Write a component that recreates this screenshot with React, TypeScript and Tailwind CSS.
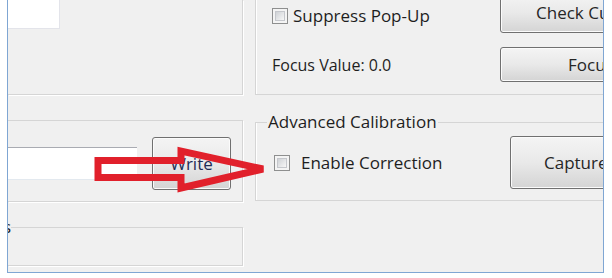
import React from 'react'

const font = { fontFamily: '"Open Sans", "Noto Sans", sans-serif' }

function CheckBox() {
  return (
    <div className="w-[16px] h-[16px] shrink-0 border border-[#8e8f8f] bg-[#f4f4f4] p-[2px]">
      <div className="w-full h-full border border-[#c5c7cc] bg-linear-to-br from-[#cfd2d6] to-[#f7f7f7]" />
    </div>
  )
}

function WinButton({ className, children, textClass }: { className: string; children: React.ReactNode; textClass?: string }) {
  return (
    <div
      className={`shrink-0 flex items-center rounded-[3px] border border-[#707070] bg-linear-to-b from-[#f4f4f4] via-[#e9e9e9] to-[#d4d4d4] shadow-[inset_0_0_0_1px_#fbfbfb] ${className}`}
    >
      <span className={`whitespace-nowrap text-[17px] ${textClass ?? 'text-[#262626]'}`}>{children}</span>
    </div>
  )
}

export default function App() {
  return (
    <div className="relative w-[612px] h-[278px] bg-white overflow-hidden" style={font}>
      <div className="ml-[7px] w-[597px] h-[273px] border-x border-b border-[#7fa6d3] bg-[#f0f0f0] overflow-hidden">
        <div className="flex gap-[12px] text-[17px] text-[#1e1e1e]">
          {/* left column */}
          <div className="w-[235px] shrink-0 flex flex-col">
            <div className="h-[95px] border-r border-b border-[#d5d5d5] shadow-[1px_1px_0_#ffffff]">
              <div className="w-[52px] h-[29px] bg-white border-r border-b border-[#e3e4ea]" />
            </div>

            <div className="mt-[25px] h-[82px] flex items-start border-t border-r border-b border-[#d5d5d5] shadow-[1px_1px_0_#ffffff]">
              <div className="mt-[26px] w-[129px] h-[33px] shrink-0 bg-white border-t border-b border-t-[#a9abb2] border-b-[#e3e9ef]" />
              <WinButton className="ml-[15px] mt-[16px] w-[79px] h-[53px] justify-center" textClass="text-[#1f2d55]">
                Write
              </WinButton>
            </div>

            <div className="mt-[25px] h-[39px] border-t border-r border-b border-[#d5d5d5] shadow-[1px_1px_0_#ffffff]">
              <div className="-mt-[12px] -ml-[87px] w-[90px] text-right leading-[22px] bg-[#f0f0f0]">Settings</div>
            </div>
          </div>

          {/* right column */}
          <div className="flex-1 min-w-0 flex flex-col">
            <div className="h-[95px] pl-[16px] border-l border-b border-[#d5d5d5] shadow-[inset_1px_0_0_#ffffff]">
              <div className="flex items-start h-[33px]">
                <div className="mt-[7px] w-[228px] shrink-0 flex items-center gap-[5px]">
                  <CheckBox />
                  <span className="leading-[18px]">Suppress Pop-Up</span>
                </div>
                <WinButton className="-mt-[7px] h-[40px] w-[160px] pl-[35px]">Check Current</WinButton>
              </div>
              <div className="mt-[14px] flex items-center h-[35px]">
                <span className="w-[228px] shrink-0 text-[16px]">Focus Value: 0.0</span>
                <WinButton className="h-[35px] w-[160px] pl-[67px]">Focus</WinButton>
              </div>
            </div>

            <div className="mt-[27px] h-[79px] border-t border-l border-b border-[#d5d5d5] shadow-[inset_1px_0_0_#ffffff]">
              <div className="-mt-[12px] ml-[11px] w-fit px-[1px] leading-[22px] bg-[#f0f0f0]">Advanced Calibration</div>
              <div className="mt-[3px] flex items-center">
                <div className="ml-[18px] w-[236px] shrink-0 flex items-center gap-[11px]">
                  <CheckBox />
                  <span>Enable Correction</span>
                </div>
                <WinButton className="h-[53px] w-[160px] pl-[33px]">Capture</WinButton>
              </div>
            </div>
          </div>
        </div>
      </div>

      {/* red annotation arrow */}
      <svg className="absolute left-0 top-0 pointer-events-none" width="612" height="278" viewBox="0 0 612 278">
        <polygon
          points="98,160.5 181,160.5 181,151 263,169 181,188 181,177.5 98,177.5"
          fill="none"
          stroke="#e1202b"
          strokeWidth="7"
          strokeLinejoin="miter"
        />
      </svg>
    </div>
  )
}
